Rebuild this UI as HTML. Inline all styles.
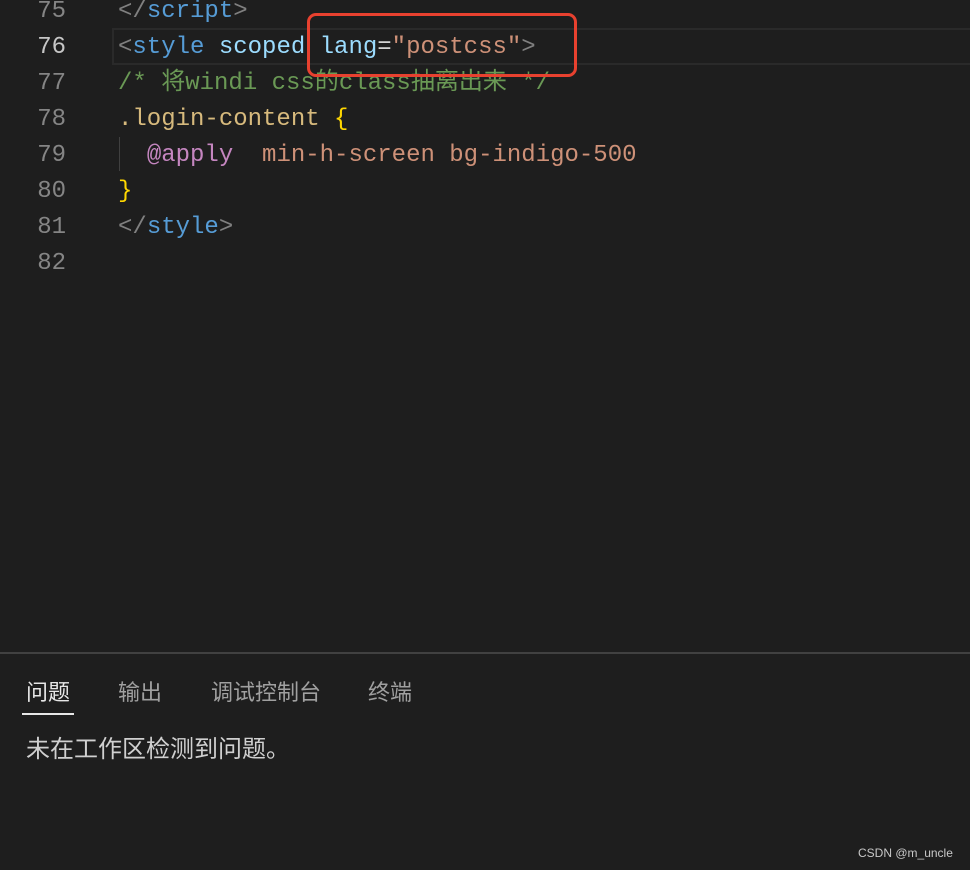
<!DOCTYPE html>
<html><head><meta charset="utf-8"><style>
body{margin:0;width:970px;height:870px;background:#1e1e1e;overflow:hidden;position:relative;font-family:"Liberation Mono","Noto Sans CJK SC",monospace;}
.ln{position:absolute;left:0;width:66px;text-align:right;font-size:24px;color:#858585;height:36px;line-height:36px;}
.cd{position:absolute;left:118px;font-size:24px;height:36px;line-height:36px;white-space:pre;color:#d4d4d4;}
.g{color:#808080}.b{color:#569cd6}.lb{color:#9cdcfe}.s{color:#ce9178}.c{color:#6a9955}.y{color:#d7ba7d}.br{color:#ffd700}.p{color:#c586c0}
.ui{font-family:"Liberation Sans","Noto Sans CJK SC",sans-serif;}
</style></head><body>
<div style="position:absolute;left:112px;top:28px;width:858px;height:33px;border:2px solid #2a2a2a;border-right:none"></div>
<div class="ln" style="top:-6px">75</div><div class="cd" style="top:-6px"><span class="g">&lt;/</span><span class="b">script</span><span class="g">&gt;</span></div>
<div class="ln" style="top:30px;color:#c6c6c6">76</div><div class="cd" style="top:30px"><span class="g">&lt;</span><span class="b">style</span> <span class="lb">scoped</span> <span class="lb">lang</span>=<span class="s">"postcss"</span><span class="g">&gt;</span></div>
<div class="ln" style="top:66px">77</div><div class="cd c" style="top:66px">/* 将windi css的class抽离出来 */</div>
<div class="ln" style="top:102px">78</div><div class="cd" style="top:102px"><span class="y">.login-content</span> <span class="br">{</span></div>
<div class="ln" style="top:138px">79</div><div class="cd" style="top:138px">  <span class="p">@apply</span>  <span class="s">min-h-screen bg-indigo-500</span></div>
<div style="position:absolute;left:119px;top:137px;width:1px;height:34px;background:#404040"></div>
<div class="ln" style="top:174px">80</div><div class="cd br" style="top:174px">}</div>
<div class="ln" style="top:210px">81</div><div class="cd" style="top:210px"><span class="g">&lt;/</span><span class="b">style</span><span class="g">&gt;</span></div>
<div class="ln" style="top:246px">82</div>
<div style="position:absolute;left:307px;top:13px;width:264px;height:58px;border:3px solid #e8412f;border-radius:9px"></div>
<div style="position:absolute;left:0;top:652px;width:970px;height:2px;background:#414141"></div>
<div class="ui" style="position:absolute;top:675px;left:26px;font-size:22px;color:#e7e7e7">问题</div>
<div class="ui" style="position:absolute;top:675px;left:118px;font-size:22px;color:#a0a0a0">输出</div>
<div class="ui" style="position:absolute;top:675px;left:211px;font-size:22px;color:#a0a0a0">调试控制台</div>
<div class="ui" style="position:absolute;top:675px;left:368px;font-size:22px;color:#a0a0a0">终端</div>
<div style="position:absolute;left:22px;top:713px;width:52px;height:2px;background:#e7e7e7"></div>
<div class="ui" style="position:absolute;top:729px;left:26px;font-size:24px;color:#d0d0d0">未在工作区检测到问题。</div>
<div class="ui" style="position:absolute;top:846px;left:858px;font-size:12px;color:#c8c8c8">CSDN @m_uncle</div>
</body></html>
